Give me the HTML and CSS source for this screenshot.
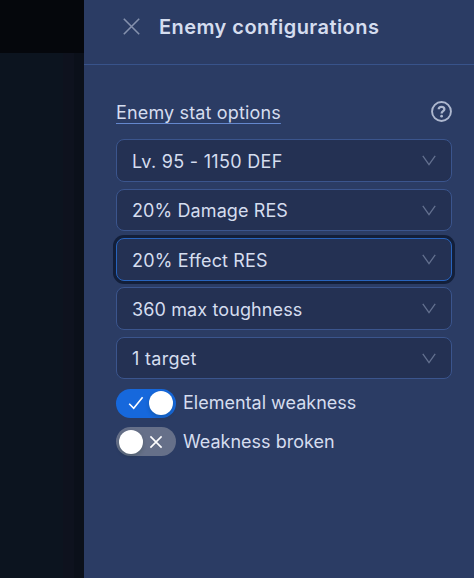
FILE: index.html
```html
<!DOCTYPE html>
<html lang="en">
<head>
<meta charset="utf-8">
<title>Enemy configurations</title>
<link rel="stylesheet" href="styles.css">
</head>
<body>
<div class="backdrop"><div class="topbar"></div><div class="page"><div class="edge"></div><div class="edge-inner"></div></div></div>
<aside class="drawer">
  <header class="head">
    <svg class="close" width="17" height="17" viewBox="0 0 17 17"><path d="M.8.8l15.4 15.4M16.2.8L.8 16.2"/></svg>
    <h1>Enemy configurations</h1>
  </header>
  <main class="body">
    <div class="section">
      <span class="label">Enemy stat options</span>
      <svg class="help" width="21" height="21" viewBox="0 0 22 22"><circle cx="11" cy="11" r="9.9"/><path class="mark" d="M8.1 8.7C8.1 5.3 14 5.3 14 8.7c0 2-2.9 2-2.9 4.3"/><circle class="dot" cx="11.1" cy="15.9" r="1.4"/></svg>
    </div>
    <div class="selects">
      <div class="select"><span class="level">Lv. 95 - 1150 DEF</span><svg class="chev" width="14" height="11" viewBox="0 0 14 11"><path d="M.8.8L7 9.6 13.2.8"/></svg></div>
      <div class="select short"><span class="damage">20% Damage RES</span><svg class="chev" width="14" height="11" viewBox="0 0 14 11"><path d="M.8.8L7 9.6 13.2.8"/></svg></div>
      <div class="select focused"><span class="effect">20% Effect RES</span><svg class="chev" width="14" height="11" viewBox="0 0 14 11"><path d="M.8.8L7 9.6 13.2.8"/></svg></div>
      <div class="select"><span class="toughness">360 max toughness</span><svg class="chev" width="14" height="11" viewBox="0 0 14 11"><path d="M.8.8L7 9.6 13.2.8"/></svg></div>
      <div class="select short"><span class="target">1 target</span><svg class="chev" width="14" height="11" viewBox="0 0 14 11"><path d="M.8.8L7 9.6 13.2.8"/></svg></div>
    </div>
    <div class="toggle-row">
      <div class="switch on"><svg width="16" height="14" viewBox="0 0 16 14"><path d="M1.2 7.8l4.5 4.4L14.6 1.3"/></svg><i class="knob"></i></div>
      <span>Elemental weakness</span>
    </div>
    <div class="toggle-row">
      <div class="switch"><i class="knob"></i><svg width="14" height="14" viewBox="0 0 14 14"><path d="M1.4 1.4l11.2 11.2M12.6 1.4L1.4 12.6"/></svg></div>
      <span>Weakness broken</span>
    </div>
  </main>
</aside>
</body>
</html>
```

FILE: styles.css
```css
* { box-sizing: border-box; }
body {
  margin: 0;
  width: 474px;
  height: 578px;
  display: flex;
  overflow: hidden;
  font: 18px/28px Inter, "Liberation Sans", sans-serif;
  color: #d5ddef;
  background: #2b3c64;
}
svg { display: block; fill: none; flex: none; }
span, h1 { white-space: nowrap; }
.backdrop { width: 84px; display: flex; flex-direction: column; }
.topbar { height: 53px; background: #05070c; }
.page { flex: 1; display: flex; justify-content: flex-end; background: #0c141f; }
.edge { width: 11px; background: #0e121e; }
.edge-inner { width: 10px; background: #0b101a; }
.drawer { width: 390px; background: #2b3c64; }
.head {
  height: 65px;
  padding: 0 0 11px 39px;
  display: flex;
  align-items: center;
  gap: 19px;
  border-bottom: 1px solid #38538a;
}
.close { stroke: #8591ad; stroke-width: 1.6; }
h1 { margin: 0; font-size: 20px; font-weight: 600; line-height: 28px; letter-spacing: .44px; }
.body { padding: 33px 22px 0 32px; }
.section { height: 28px; display: flex; justify-content: space-between; align-items: center; }
.label {
  padding-top: 2px;
  letter-spacing: .15px;
  text-decoration: underline #6487cd 1px;
  text-underline-offset: 4px;
}
.help { margin-bottom: 1px; stroke: #aeb8cf; stroke-width: 2; }
.help .mark { stroke-width: 2.4; }
.help .dot { fill: #aeb8cf; stroke: none; }
.selects { margin-top: 13px; display: flex; flex-direction: column; gap: 6px; }
.select {
  height: 43px;
  padding: 0 15px;
  display: flex;
  align-items: center;
  justify-content: space-between;
  border: 1px solid #3b558d;
  border-radius: 8px;
  background: #243153;
}
.select span { padding-top: 2px; }
.select.short { height: 42px; }
.select:first-child, .select:nth-child(4) { margin-bottom: 1px; }
.select.short:nth-child(2) { margin-bottom: 1px; }
.select.focused { border-color: #2864bd; box-shadow: 0 0 0 3px #131f3a; }
.level { letter-spacing: .3px; }
.damage { letter-spacing: .1px; }
.effect { letter-spacing: .15px; }
.toughness { letter-spacing: .12px; }
.target { letter-spacing: .3px; }
.chev { stroke: #63708f; stroke-width: 1.3; }
.toggle-row { height: 29px; margin-top: 9px; display: flex; align-items: center; gap: 7px; }
.selects + .toggle-row { margin-top: 10px; }
.selects + .toggle-row span { padding-bottom: 2px; }
.switch {
  width: 60px;
  height: 29px;
  padding: 1px 8px 0 3px;
  display: flex;
  align-items: center;
  gap: 6px;
  border-radius: 15px;
  background: #667089;
}
.switch.on { padding: 0 3px 1px 12px; gap: 5px; background: #1668dc; }
.switch svg { stroke: #fff; stroke-width: 1.6; }
.knob { width: 24px; height: 24px; flex: none; border-radius: 50%; background: #fff; box-shadow: 0 2px 4px rgba(0, 35, 11, .2); }
```
